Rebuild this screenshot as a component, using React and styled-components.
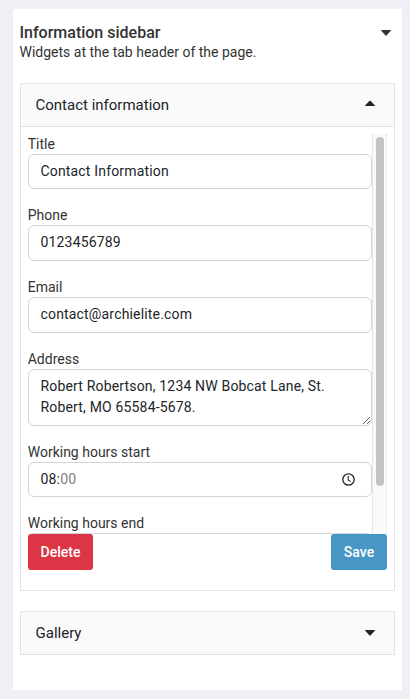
import React from "react";
import styled, { createGlobalStyle } from "styled-components";

const Global = createGlobalStyle`
  *, *::before, *::after { box-sizing: border-box; }
  html { background: #eff0f5; }
  body {
    margin: 0;
    background: #eff0f5;
    color: #212529;
    font-family: Roboto, sans-serif;
    font-size: 14px;
    line-height: 20px;
    overflow: hidden;
  }
`;

const Page = styled.div`
  height: 699px;
  padding: 9px 8px 9px 13px;
`;

const Sidebar = styled.section`
  height: 681px;
  padding: 14px 7px 0;
  background: #fff;
`;

const SidebarHeader = styled.header`
  display: flex;
  justify-content: space-between;
  height: 60px;
  padding-right: 4px;
  color: #333;
`;

const HeaderText = styled.div`
  margin-left: -0.5px;
`;

const Heading = styled.h3`
  margin: 0;
  font-size: 16px;
  font-weight: 500;
  line-height: 20px;
`;

const Description = styled.p`
  margin: 0;
  line-height: 19px;
  white-space: nowrap;
`;

const CaretIcon = styled.svg`
  display: block;
  flex: none;
  width: 10px;
  height: 6px;
  margin-top: ${(p) => p.$top || 0}px;
  fill: currentColor;
`;

const Widget = styled.article`
  margin-bottom: 20px;
  border: 1px solid #e2e2e4;
`;

const WidgetHeader = styled.div`
  display: flex;
  justify-content: space-between;
  height: ${(p) => (p.$open ? 43 : 42)}px;
  padding: 0 19.5px 0 14.5px;
  background: #fafafa;
  border-bottom: ${(p) => (p.$open ? "1px solid #e2e2e4" : "none")};
`;

const WidgetTitle = styled.span`
  font-size: 15px;
  line-height: 42px;
`;

const WidgetBody = styled.div`
  height: 463px;
  padding: 7px 7px 0;
`;

const ScrollArea = styled.div`
  display: flex;
  height: 400px;
  overflow: hidden;
`;

const Fields = styled.form`
  width: 344px;
  flex: none;
`;

const Field = styled.div`
  display: flex;
  flex-direction: column;
  height: ${(p) => p.$height}px;
`;

const Label = styled.label`
  height: 20px;
  flex: none;
  margin-left: -0.3px;
  color: #333;
  line-height: 20px;
`;

const controlStyle = `
  width: 100%;
  margin: 0;
  border: 1px solid #d2d4dd;
  border-radius: 6px;
  background: #fff;
  color: #212529;
  font-family: Roboto, sans-serif;
  font-size: 14px;
  letter-spacing: 0.17px;
  outline: none;
`;

const Input = styled.input`
  ${controlStyle}
  height: ${(p) => p.$height}px;
  padding: 0 11.5px 2px;
`;

const TextArea = styled.textarea`
  ${controlStyle}
  height: 57px;
  padding: 6px 11.5px;
  line-height: 21px;
  resize: vertical;
  overflow: hidden;
`;

const TimeBox = styled.div`
  ${controlStyle}
  display: flex;
  align-items: center;
  justify-content: space-between;
  height: 35px;
  flex: none;
  padding: 0 16px 0 11.5px;
`;

const Time = styled.span`
  padding-bottom: 2px;
`;

const Minutes = styled.span`
  color: #808080;
`;

const Track = styled.div`
  width: 15px;
  flex: none;
  padding: 3px 2px 0 3px;
  background: #fafafa;
  border-left: 1px solid #e6e6e6;
  border-right: 1px dotted #dadada;
`;

const Thumb = styled.div`
  width: 8px;
  height: 349px;
  border-radius: 4px;
  background: #c3c3c3;
`;

const Actions = styled.div`
  display: flex;
  justify-content: space-between;
`;

const Button = styled.button`
  width: ${(p) => p.$width}px;
  height: 36px;
  padding: 0;
  border: 0;
  border-radius: 3px;
  background: ${(p) => (p.$danger ? "#dc3545" : "#4796c4")};
  color: #fff;
  font-family: Roboto, sans-serif;
  font-size: 14px;
  font-weight: 500;
`;

const Caret = ({ up, top }) => (
  <CaretIcon viewBox="0 0 10 6" $top={top}>
    <path
      d={
        up
          ? "M.6 6Q-.1 6 .3 5.3L4.3 1Q5 .4 5.7 1L9.7 5.3Q10.1 6 9.4 6Z"
          : "M.6 0Q-.1 0 .3 .7L4.3 5.3Q5 6 5.7 5.3L9.7 .7Q10.1 0 9.4 0Z"
      }
    />
  </CaretIcon>
);

const Clock = () => (
  <svg width="13" height="13" viewBox="0 0 13 13" fill="none" stroke="#212529">
    <circle cx="6.5" cy="6.5" r="5.7" strokeWidth="1.3" />
    <path d="M6.2 3v4l2.5 1.6" strokeWidth="1.1" />
  </svg>
);

const TextField = ({ label, value, height, inputHeight = 36 }) => (
  <Field $height={height}>
    <Label>{label}</Label>
    <Input type="text" defaultValue={value} $height={inputHeight} />
  </Field>
);

const TimeField = ({ label, hours, minutes, height }) => (
  <Field $height={height}>
    <Label>{label}</Label>
    <TimeBox>
      <Time>
        {hours}:<Minutes>{minutes}</Minutes>
      </Time>
      <Clock />
    </TimeBox>
  </Field>
);

export default function App() {
  return (
    <Page>
      <Global />
      <Sidebar>
        <SidebarHeader>
          <HeaderText>
            <Heading>Information sidebar</Heading>
            <Description>Widgets at the tab header of the page.</Description>
          </HeaderText>
          <Caret top={7} />
        </SidebarHeader>

        <Widget>
          <WidgetHeader $open>
            <WidgetTitle>Contact information</WidgetTitle>
            <Caret up top={15.5} />
          </WidgetHeader>
          <WidgetBody>
            <ScrollArea>
              <Fields>
                <TextField label="Title" value="Contact Information" height={71} inputHeight={35} />
                <TextField label="Phone" value="0123456789" height={72} />
                <TextField label="Email" value="contact@archielite.com" height={72} />
                <Field $height={93}>
                  <Label>Address</Label>
                  <TextArea defaultValue="Robert Robertson, 1234 NW Bobcat Lane, St. Robert, MO 65584-5678." />
                </Field>
                <TimeField label="Working hours start" hours="08" minutes="00" height={71} />
                <Field $height={55}>
                  <Label>Working hours end</Label>
                  <TimeBox />
                </Field>
              </Fields>
              <Track>
                <Thumb />
              </Track>
            </ScrollArea>
            <Actions>
              <Button type="button" $danger $width={65}>Delete</Button>
              <Button type="button" $width={56}>Save</Button>
            </Actions>
          </WidgetBody>
        </Widget>

        <Widget>
          <WidgetHeader>
            <WidgetTitle>Gallery</WidgetTitle>
            <Caret top={17.5} />
          </WidgetHeader>
        </Widget>
      </Sidebar>
    </Page>
  );
}
